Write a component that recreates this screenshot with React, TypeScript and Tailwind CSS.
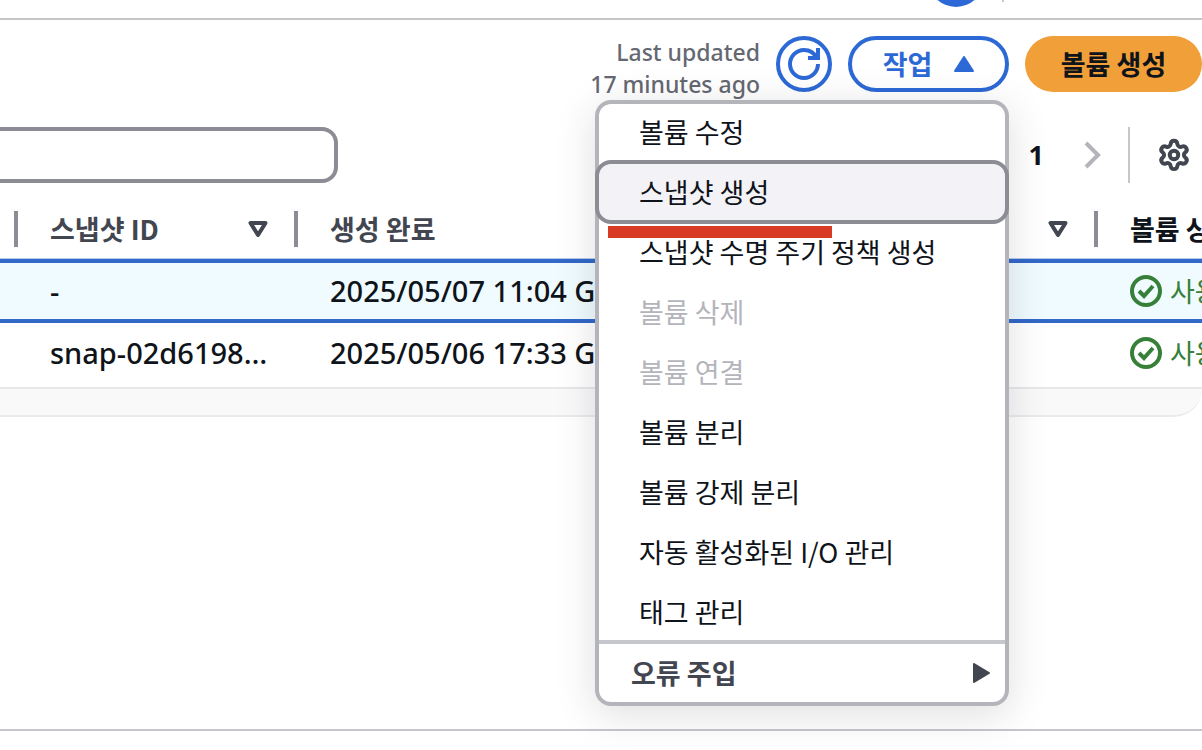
import { Settings } from "lucide-react";

const volumes = [
  { snapshot: "-", created: "2025/05/07 11:04 GMT+9", state: "사용 중", selected: true },
  { snapshot: "snap-02d6198…", created: "2025/05/06 17:33 GMT+9", state: "사용 중", selected: false },
];

const actions = [
  { label: "볼륨 수정" },
  { label: "스냅샷 생성", active: true },
  { label: "스냅샷 수명 주기 정책 생성" },
  { label: "볼륨 삭제", disabled: true },
  { label: "볼륨 연결", disabled: true },
  { label: "볼륨 분리" },
  { label: "볼륨 강제 분리" },
  { label: "자동 활성화된 I/O 관리" },
  { label: "태그 관리" },
];

function RefreshIcon() {
  return (
    <svg viewBox="0 0 16 16" className="size-8" fill="none" stroke="currentColor" strokeWidth="2">
      <path d="M10 5h5V0" />
      <path d="M15 8c0 3.87-3.13 7-7 7s-7-3.13-7-7 3.13-7 7-7c2.79 0 5.2 1.63 6.33 4" />
    </svg>
  );
}

function CheckIcon() {
  return (
    <svg viewBox="0 0 32 32" className="size-8 shrink-0" fill="none" stroke="currentColor" strokeWidth="4">
      <circle cx="16" cy="16" r="14" />
      <path d="m9 16 5 5 9-10" />
    </svg>
  );
}

function SortIcon() {
  return (
    <svg viewBox="0 0 20 16" className="h-4 w-5 shrink-0" fill="none" stroke="currentColor" strokeWidth="4" strokeLinejoin="round">
      <path d="M2.5 2h15L10 14z" />
    </svg>
  );
}

function HeaderCell({ label, sortable, last }: { label: string; sortable?: boolean; last?: boolean }) {
  return (
    <th scope="col" className={`border-b border-[#b5c8ee] p-0 text-left font-bold ${last ? "text-[#0f141a]" : "text-[#424650]"}`}>
      <div className="flex h-[59px] items-center">
        <div className={`flex flex-1 items-center justify-between whitespace-nowrap ${sortable ? "pr-[26px]" : ""} ${label ? "pl-8" : ""}`}>
          <span>{label}</span>
          {sortable && <SortIcon />}
        </div>
        {!last && <span className="h-9 w-1 bg-[#8c8c94]" />}
      </div>
    </th>
  );
}

function ActionsMenu() {
  return (
    <div className="absolute top-16 right-0 z-10 w-[414px] rounded-2xl border-4 border-[#b4b4bb] bg-white shadow-[0_8px_40px_2px_rgba(0,7,22,0.12)]">
      <ul>
        {actions.map((action) => (
          <li key={action.label} className="-mx-1 -mt-1">
            <button
              type="button"
              disabled={action.disabled}
              className={`flex h-16 w-full items-center rounded-2xl border-4 pl-10 text-left ${
                action.active ? "border-[#8c8c94] bg-[#f3f3f7]" : "border-transparent"
              } ${action.disabled ? "text-[#b4b4bb]" : "text-[#0f141a]"}`}
            >
              {action.label}
            </button>
          </li>
        ))}
      </ul>
      <button type="button" className="-mt-1 flex h-[62px] w-full items-center justify-between border-t-4 border-[#c6c6cd] pr-[14px] pl-8 font-bold text-[#424650]">
        오류 주입
        <svg viewBox="0 0 20 20" className="size-5" fill="currentColor" stroke="currentColor" strokeWidth="2" strokeLinejoin="round">
          <path d="M3 1v18L18 10z" />
        </svg>
      </button>
      <span className="absolute top-[122px] left-[9px] h-3 w-56 bg-[#d93a26]" />
    </div>
  );
}

export default function App() {
  return (
    <main className="flex min-h-screen flex-col overflow-hidden bg-white font-['Noto_Sans_CJK_KR',sans-serif] text-[27px] leading-8 text-[#0f141a]">
      <header className="h-5 border-b-2 border-[#c6c6c9]">
        <div className="flex h-[7px] items-end justify-end overflow-hidden pr-[198px]">
          <button type="button" aria-label="도움말" className="size-14 shrink-0 rounded-full bg-[#2d69d6]" />
          <span className="ml-[18px] h-full w-0.5">
            <span className="block h-0.5 bg-[#c6c6cd]" />
          </span>
        </div>
      </header>

      <section>
        <div className="flex h-20 items-start justify-end gap-4 pt-4">
          <p className="text-right font-['Noto_Sans',sans-serif] text-[23px] font-medium text-[#656871]">
            Last updated
            <br />
            17 minutes ago
          </p>
          <button type="button" aria-label="새로 고침" className="flex size-14 items-center justify-center rounded-full border-4 border-[#2d69d6] text-[#2d69d6]">
            <RefreshIcon />
          </button>
          <div className="relative">
            <button type="button" className="flex h-14 w-[161px] items-center justify-center gap-[22px] rounded-full border-4 border-[#2d69d6] font-bold text-[#2d69d6]">
              작업
              <svg viewBox="0 0 20 16" className="h-4 w-5" fill="currentColor" stroke="currentColor" strokeWidth="2" strokeLinejoin="round">
                <path d="M1 15h18L10 1z" />
              </svg>
            </button>
            <ActionsMenu />
          </div>
          <button type="button" className="h-14 w-[177px] rounded-full bg-[#f19f39] font-bold">볼륨 생성</button>
        </div>

        <div className="mt-[27px] flex items-center justify-between pr-[11px]">
          <input aria-label="볼륨 검색" className="h-14 w-[338px] rounded-r-2xl border-4 border-l-0 border-[#8c8c94] px-4 outline-none" />
          <div className="flex items-center">
            <button type="button" className="px-2 font-['Open_Sans',sans-serif] text-[27px] font-bold">1</button>
            <button type="button" aria-label="다음 페이지" className="ml-8 text-[#b4b4bb]">
              <svg viewBox="0 0 18 28" className="h-7 w-[18px]" fill="none" stroke="currentColor" strokeWidth="4">
                <path d="m2 2 12 12L2 26" />
              </svg>
            </button>
            <span className="ml-[26px] h-14 w-0.5 bg-[#c6c6cd]" />
            <button type="button" aria-label="기본 설정" className="ml-[27px] text-[#424650]">
              <Settings size={34} strokeWidth={2.8} />
            </button>
          </div>
        </div>

        <table className="mt-4 w-full table-fixed border-separate border-spacing-0">
          <colgroup>
            <col className="w-[18px]" />
            <col className="w-[280px]" />
            <col className="w-[400px]" />
            <col />
            <col className="w-[104px]" />
          </colgroup>
          <thead>
            <tr>
              <HeaderCell label="" />
              <HeaderCell label="스냅샷 ID" sortable />
              <HeaderCell label="생성 완료" sortable />
              <HeaderCell label="" sortable />
              <HeaderCell label="볼륨 상태" last />
            </tr>
          </thead>
          <tbody>
            {volumes.map((volume) => {
              const cell = volume.selected
                ? "h-16 border-y-4 border-[#3268c8] bg-[#f0fbff] p-0"
                : "h-[66px] border-b-2 border-[#e8e8ea] p-0 pb-1";
              return (
                <tr key={volume.created} className="whitespace-nowrap">
                  <td className={cell} />
                  <td className={`${cell} pl-8 font-['Noto_Sans',sans-serif] text-[29px] font-medium`}>{volume.snapshot}</td>
                  <td className={`${cell} pl-8 font-['Noto_Sans',sans-serif] text-[29px] font-medium`}>{volume.created}</td>
                  <td className={cell} />
                  <td className={`${cell} pl-8 text-[#37803a]`}>
                    <span className="flex items-center gap-2">
                      <CheckIcon />
                      {volume.state}
                    </span>
                  </td>
                </tr>
              );
            })}
          </tbody>
        </table>
        <div className="h-7 rounded-br-[32px] border-b-2 border-[#ebebed] bg-[#f9f9fa]" />
      </section>

      <footer className="mt-auto h-[21px] border-t-2 border-[#c6c6cd]" />
    </main>
  );
}
